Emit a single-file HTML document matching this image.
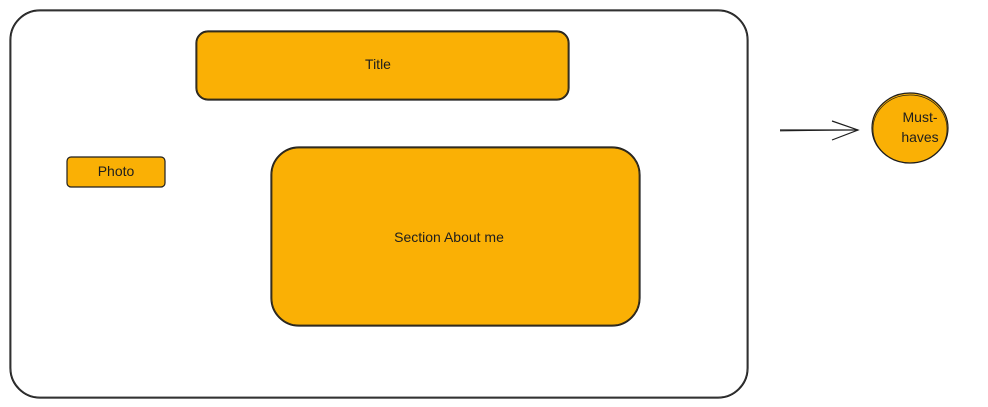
<!DOCTYPE html>
<html><head><meta charset="utf-8"><style>
html,body{margin:0;padding:0;background:#fff;width:988px;height:407px;overflow:hidden}
text{font-family:"Liberation Sans",sans-serif;font-size:14px;fill:#1e1e1e}
</style></head><body>
<svg width="988" height="407" viewBox="0 0 988 407" xmlns="http://www.w3.org/2000/svg">
<g fill="none" stroke="#1e1e1e" stroke-width="1.2">
<rect x="10" y="10" width="738" height="388" rx="30" fill="#fff"/>
<rect x="11" y="11" width="736" height="386" rx="29" stroke-width="0.8"/>
<rect x="196" y="31" width="373" height="69" rx="12" fill="#fab005"/>
<rect x="197" y="32" width="371" height="67" rx="11" stroke-width="0.7"/>
<rect x="67" y="157" width="98" height="30" rx="4" fill="#fab005"/>
<rect x="271" y="147" width="369" height="179" rx="28" fill="#fab005"/>
<rect x="272" y="148" width="367" height="177" rx="27" stroke-width="0.7"/>
<path d="M780 130 L858 130"/>
<path d="M780 131 L857 130" stroke-width="0.7"/>
<path d="M832 121 L858 130 L832 140"/>
<ellipse cx="910" cy="128" rx="38" ry="35" fill="#fab005"/>
<ellipse cx="910" cy="129" rx="37" ry="34" stroke-width="0.7"/>
</g>
<text x="378" y="69" text-anchor="middle">Title</text>
<text x="116" y="176" text-anchor="middle">Photo</text>
<text x="449" y="242" text-anchor="middle">Section About me</text>
<text x="920" y="122" text-anchor="middle">Must-</text>
<text x="920" y="142" text-anchor="middle">haves</text>
</svg>
</body></html>
